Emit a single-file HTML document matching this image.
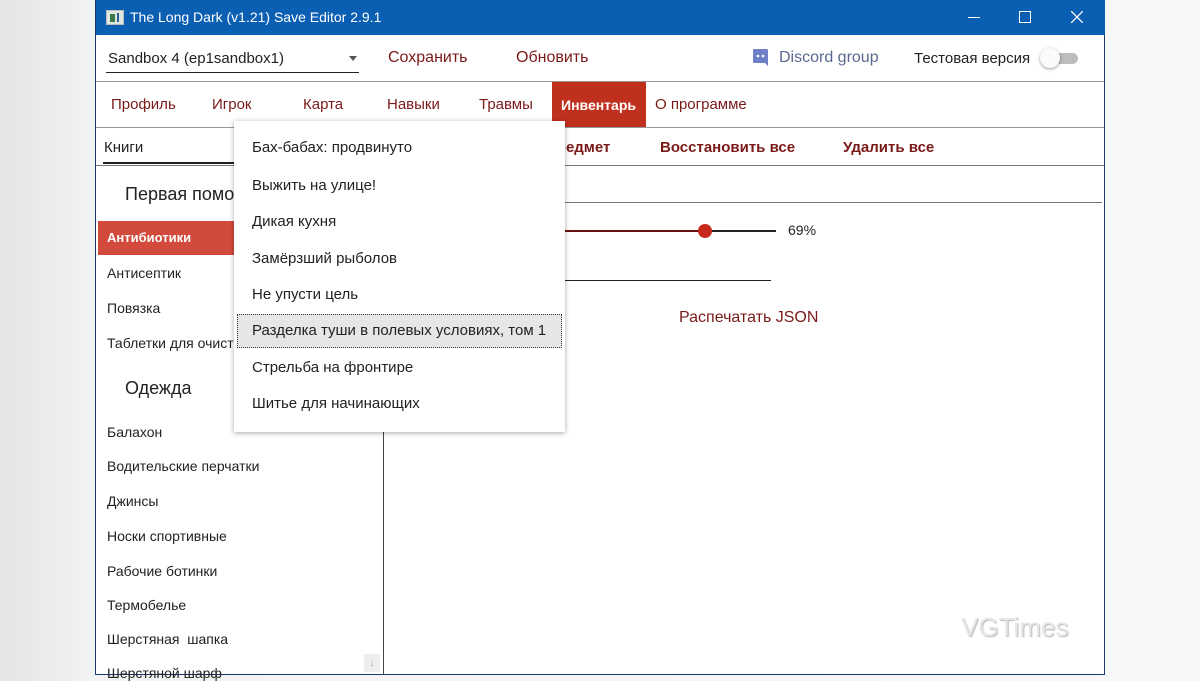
<!DOCTYPE html>
<html><head><meta charset="utf-8"><style>
*{margin:0;padding:0;box-sizing:border-box}
body{width:1200px;height:675px;overflow:hidden;background:linear-gradient(90deg,#e4e5e6,#f2f3f4 8%,#f7f8f9);font-family:"Liberation Sans",sans-serif;position:relative}
.a{position:absolute;white-space:nowrap}
#win{position:absolute;left:95px;top:0;width:1010px;height:675px;background:#fff;border:1px solid #1a3a6a;border-top:none}
.tb{position:absolute;left:0;top:0;width:1009px;height:35px;background:#0b5fb3}
.red{color:#7a1a18;font-size:16px}
.blk{color:#222;font-size:15px}
.hl{height:1px;background:#999;position:absolute}
.li{position:absolute;left:11px;font-size:14px;color:#222}
.pi{position:absolute;left:18px;font-size:15px;color:#222}
</style></head><body>
<div id="win">
 <div class="tb">
  <div class="a" style="left:10px;top:10px;width:18px;height:15px;background:#dfe8e0;border:1px solid #bbb"><div style="position:absolute;left:3px;top:3px;width:5px;height:8px;background:#3a7a4a"></div><div style="position:absolute;left:10px;top:2px;width:2px;height:9px;background:#2a5a9a"></div></div>
  <div class="a" style="left:34px;top:9px;color:#fff;font-size:14px">The Long Dark (v1.21) Save Editor 2.9.1</div>
  <div class="a" style="left:872px;top:17px;width:12px;height:1px;background:#fff"></div>
  <div class="a" style="left:923px;top:11px;width:12px;height:12px;border:1px solid #fff"></div>
  <svg class="a" style="left:975px;top:11px" width="12" height="12"><path d="M0 0L12 12M12 0L0 12" stroke="#fff" stroke-width="1.3"/></svg>
 </div>
 <div class="a blk" style="left:12px;top:50px;font-size:15px">Sandbox 4 (ep1sandbox1)</div>
 <div class="a" style="left:253px;top:56px;border-left:4px solid transparent;border-right:4px solid transparent;border-top:5px solid #555"></div>
 <div class="a" style="left:10px;top:72px;width:253px;height:1px;background:#222"></div>
 <div class="a red" style="left:292px;top:49px">Сохранить</div>
 <div class="a red" style="left:420px;top:49px">Обновить</div>
 <svg class="a" style="left:656px;top:48px" width="17" height="19" viewBox="0 0 17 19"><path d="M2 1h13a1 1 0 0 1 1 1v16l-3-3H2a1 1 0 0 1-1-1V2a1 1 0 0 1 1-1z" fill="#6f7fc8"/><circle cx="6" cy="8" r="1.3" fill="#fff"/><circle cx="11" cy="8" r="1.3" fill="#fff"/></svg>
 <div class="a" style="left:683px;top:49px;color:#5a6890;font-size:16px">Discord group</div>
 <div class="a blk" style="left:818px;top:50px">Тестовая версия</div>
 <div class="a" style="left:948px;top:53px;width:34px;height:11px;border-radius:6px;background:#bdbdbd"></div>
 <div class="a" style="left:944px;top:48px;width:20px;height:20px;border-radius:50%;background:#fafafa;box-shadow:0 1px 3px rgba(0,0,0,.4)"></div>
 <div class="hl" style="left:0;top:81px;width:1008px"></div>
 <div class="a red" style="left:15px;top:96px;font-size:15px">Профиль</div>
 <div class="a red" style="left:116px;top:96px;font-size:15px">Игрок</div>
 <div class="a red" style="left:207px;top:96px;font-size:15px">Карта</div>
 <div class="a red" style="left:291px;top:96px;font-size:15px">Навыки</div>
 <div class="a red" style="left:383px;top:96px;font-size:15px">Травмы</div>
 <div class="a" style="left:456px;top:82px;width:94px;height:46px;background:#c0301f"></div>
 <div class="a" style="left:465px;top:97px;color:#fff;font-size:14px;font-weight:bold">Инвентарь</div>
 <div class="a red" style="left:559px;top:96px;font-size:15px">О программе</div>
 <div class="hl" style="left:0;top:127px;width:1008px"></div>
 <div class="a blk" style="left:8px;top:139px;font-size:15px">Книги</div>
 <div class="a" style="left:7px;top:162px;width:135px;height:2px;background:#222"></div>
 <div class="a red" style="left:450px;top:139px;font-size:15px;font-weight:bold">Предмет</div>
 <div class="a red" style="left:564px;top:139px;font-size:15px;font-weight:bold">Восстановить все</div>
 <div class="a red" style="left:747px;top:139px;font-size:15px;font-weight:bold">Удалить все</div>
 <div class="hl" style="left:0;top:165px;width:1008px;background:#777"></div>
 <div class="hl" style="left:468px;top:202px;width:538px;background:#777"></div>
 <div class="a" style="left:468px;top:230px;width:140px;height:2px;background:#6a1010"></div>
 <div class="a" style="left:608px;top:230px;width:72px;height:2px;background:#222"></div>
 <div class="a" style="left:602px;top:224px;width:14px;height:14px;border-radius:50%;background:#c6281c"></div>
 <div class="a blk" style="left:692px;top:222px;font-size:14px">69%</div>
 <div class="a" style="left:468px;top:280px;width:207px;height:1px;background:#222"></div>
 <div class="a red" style="left:583px;top:309px;font-size:16px">Распечатать JSON</div>
 <div class="a" style="left:287px;top:166px;width:1px;height:509px;background:#444"></div>
 <div class="a" style="left:29px;top:184px;font-size:18px;color:#222">Первая помощь</div>
 <div class="a" style="left:2px;top:221px;width:140px;height:34px;background:#d24a3c"></div>
 <div class="li" style="top:230px;color:#fff;font-weight:bold;font-size:13px">Антибиотики</div>
 <div class="li" style="top:265px">Антисептик</div>
 <div class="li" style="top:300px">Повязка</div>
 <div class="li" style="top:335px">Таблетки для очистки</div>
 <div class="a" style="left:29px;top:378px;font-size:18px;color:#222">Одежда</div>
 <div class="li" style="top:424px">Балахон</div>
 <div class="li" style="top:458px">Водительские перчатки</div>
 <div class="li" style="top:493px">Джинсы</div>
 <div class="li" style="top:528px">Носки спортивные</div>
 <div class="li" style="top:563px">Рабочие ботинки</div>
 <div class="li" style="top:597px">Термобелье</div>
 <div class="li" style="top:631px">Шерстяная&nbsp; шапка</div>
 <div class="li" style="top:665px">Шерстяной шарф</div>
 <div class="a" style="left:268px;top:654px;width:16px;height:18px;background:#eee;color:#aaa;font-size:11px;text-align:center;line-height:18px">↓</div>
 <div class="a" style="left:865px;top:612px;font-size:26px;color:#e6e6e6;text-shadow:1px 1px 1px #bbb">VGTimes</div>
</div>
<div class="a" style="left:234px;top:121px;width:331px;height:311px;background:#fff;box-shadow:0 1px 5px rgba(0,0,0,.35)">
 <div class="pi" style="top:18px;width:160px;overflow:hidden">Бах-бабах: продвинутое</div>
 <div class="pi" style="top:56px">Выжить на улице!</div>
 <div class="pi" style="top:92px">Дикая кухня</div>
 <div class="pi" style="top:129px">Замёрзший рыболов</div>
 <div class="pi" style="top:165px">Не упусти цель</div>
 <div class="a" style="left:3px;top:193px;width:325px;height:34px;background:#e6e6e6;border:1px dotted #333"></div>
 <div class="pi" style="top:201px">Разделка туши в полевых условиях, том 1</div>
 <div class="pi" style="top:238px">Стрельба на фронтире</div>
 <div class="pi" style="top:274px">Шитье для начинающих</div>
</div>
</body></html>
